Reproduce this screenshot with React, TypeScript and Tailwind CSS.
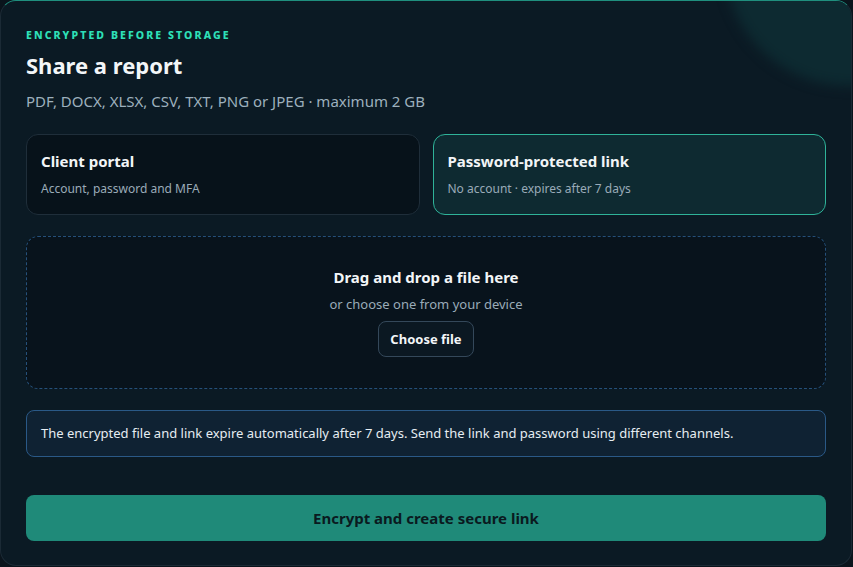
const font = { fontFamily: '"Segoe UI", "Noto Sans", "Open Sans", sans-serif' };

const options = [
  { title: "Client portal", hint: "Account, password and MFA", active: false },
  { title: "Password-protected link", hint: "No account · expires after 7 days", active: true },
] as const;

export default function App() {
  return (
    <main className="h-[567px] w-[853px] bg-[#0a141c]" style={font}>
      <section className="relative h-[566px] w-[852px] overflow-hidden rounded-[16px] border border-[#1b2a35] border-t-[#1f8f7e] bg-[#0b1a24] px-[25px] pt-[27px]">
        <div className="pointer-events-none absolute -right-[123px] -top-[165px] h-[250px] w-[250px] rounded-full bg-[#0d2a31] blur-[6px]" />

        <div className="relative">
          <p className="text-[10.5px] font-extrabold uppercase tracking-[0.2em] text-[#2ee0b8]">Encrypted before storage</p>
          <h1 className="mt-[6px] text-[22px] font-bold leading-[30px] text-[#f3f6f8]">Share a report</h1>
          <p className="mt-[11px] text-[15px] leading-[20px] text-[#9db0bd]">
            PDF, DOCX, XLSX, CSV, TXT, PNG or JPEG · maximum 2 GB
          </p>

          <div className="mt-[23px] grid grid-cols-2 gap-[13px]">
            {options.map((o) => (
              <button
                key={o.title}
                type="button"
                className={
                  o.active
                    ? "h-[81px] rounded-[12px] border border-[#2fb399] bg-[#0e2a31] px-[14px] text-left"
                    : "h-[81px] rounded-[12px] border border-[#1f2e3a] bg-[#07121a] px-[14px] text-left"
                }
              >
                <div className="text-[15px] font-bold leading-[20px] text-[#f2f5f7]">{o.title}</div>
                <div className="mt-[10px] text-[12px] leading-[16px] text-[#9aabb8]">{o.hint}</div>
              </button>
            ))}
          </div>

          <div className="mt-[21px] flex h-[153px] flex-col items-center justify-center rounded-[12px] border border-dashed border-[#25507a] bg-[#08131c]">
            <div className="text-[15px] font-bold leading-[20px] text-[#f3f6f8]">Drag and drop a file here</div>
            <div className="mt-[8px] text-[13px] leading-[18px] text-[#9aabb8]">or choose one from your device</div>
            <button
              type="button"
              className="mt-[8px] h-[36px] rounded-[8px] border border-[#34485a] bg-[#0b1822] px-[11px] text-[13px] font-bold text-[#f3f6f8]"
            >
              Choose file
            </button>
          </div>

          <div className="mt-[21px] flex h-[47px] items-center rounded-[8px] border border-[#2a5987] bg-[#0f2233] px-[14px] text-[13px] text-[#e6edf2]">
            The encrypted file and link expire automatically after 7 days. Send the link and password using different channels.
          </div>

          <button
            type="button"
            className="mt-[38px] h-[46px] w-full rounded-[8px] bg-[#1f8a79] text-[15px] font-bold text-[#0a1a1f]"
          >
            Encrypt and create secure link
          </button>
        </div>
      </section>
    </main>
  );
}
